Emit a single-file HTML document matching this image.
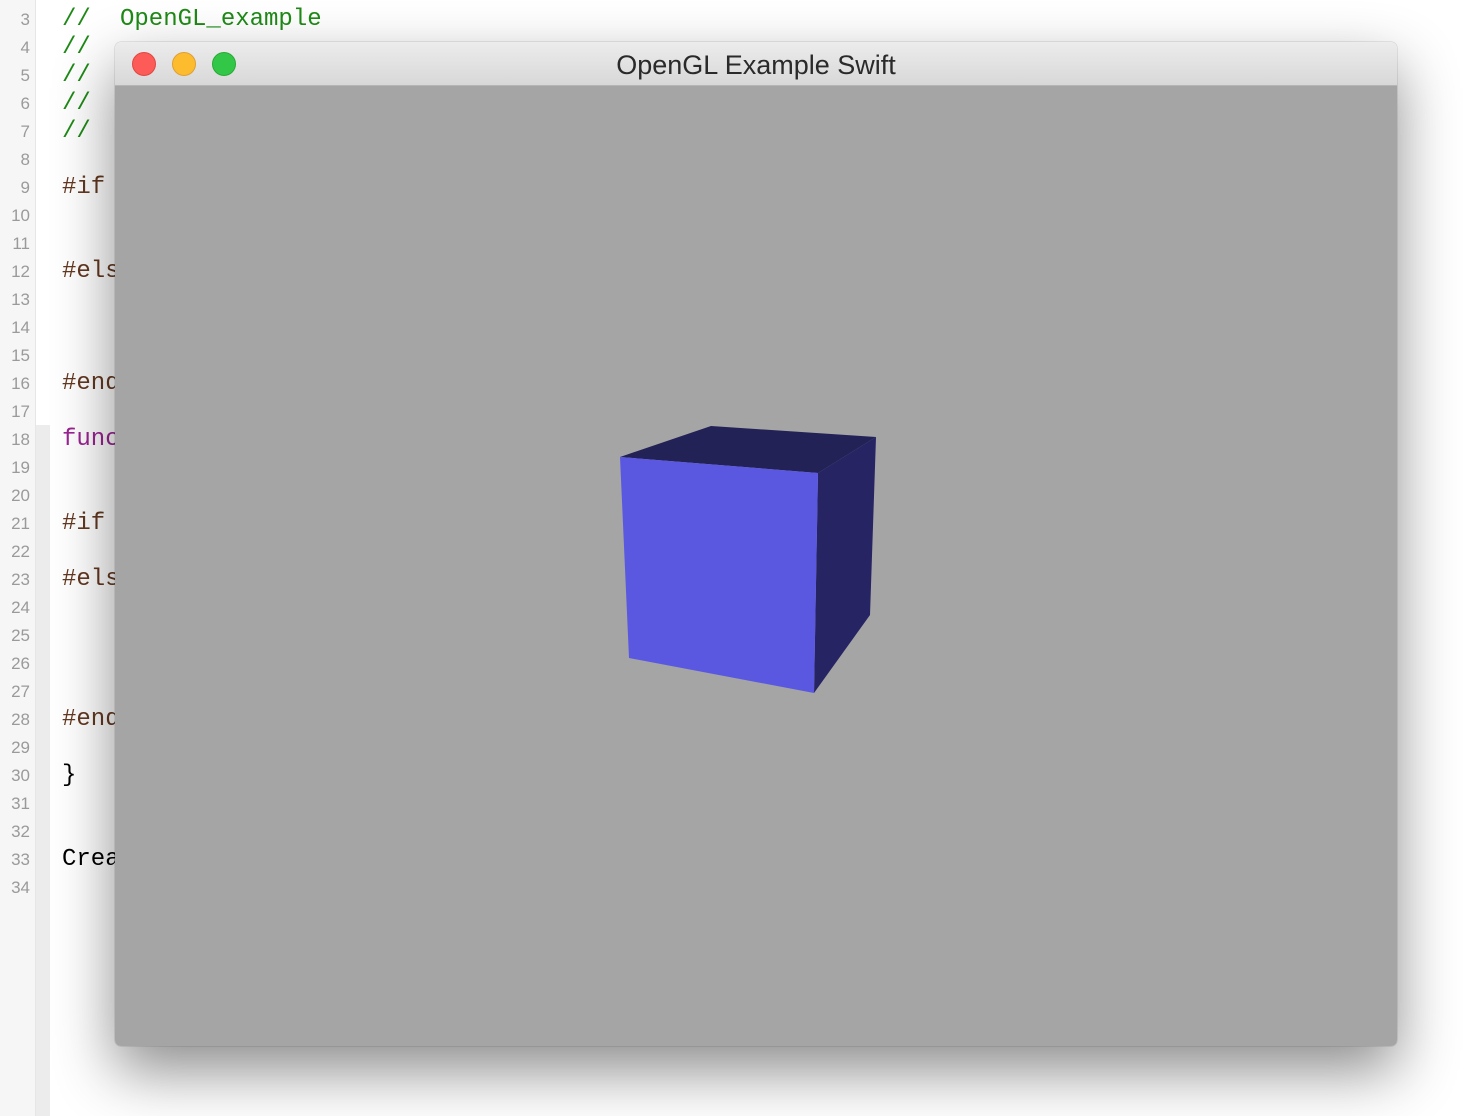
<!DOCTYPE html>
<html><head><meta charset="utf-8"><style>
*{margin:0;padding:0;box-sizing:border-box}
body{width:1474px;height:1116px;overflow:hidden;background:#fff;position:relative;font-family:"Liberation Mono",monospace}
.gut{position:absolute;left:0;top:0;width:36px;height:1116px;background:#f6f6f6;border-right:1px solid #e6e6e6}
.ln{position:absolute;left:0;width:30px;text-align:right;font-size:17px;color:#9a9a9a;font-family:"Liberation Sans",sans-serif;line-height:28px}
.cd{position:absolute;left:62px;font-size:24px;white-space:pre;line-height:28px}
.g{color:#1e8a16}.b{color:#643820}.p{color:#9b2393}.k{color:#000}
.win{position:absolute;left:115px;top:42px;width:1282px;height:1004px;border-radius:6px;overflow:hidden;box-shadow:0 25px 60px rgba(0,0,0,.45),0 0 1px rgba(0,0,0,.5)}
.tb{height:44px;background:linear-gradient(#ececec,#d8d8d8);border-bottom:1px solid #b5b5b5;position:relative;text-align:center;font-family:"Liberation Sans",sans-serif;font-size:27px;line-height:46px;color:#2a2a2a}
.dot{position:absolute;top:10px;width:24px;height:24px;border-radius:50%}
.ct{position:absolute;top:44px;left:0;right:0;bottom:0;background:#a5a5a5}
</style></head><body>
<div class="gut"></div>
<div style="position:absolute;left:36px;top:425px;width:14px;height:691px;background:#ececec"></div>
<div class="ln" style="top:6px">3</div>
<div class="ln" style="top:34px">4</div>
<div class="ln" style="top:62px">5</div>
<div class="ln" style="top:90px">6</div>
<div class="ln" style="top:118px">7</div>
<div class="ln" style="top:146px">8</div>
<div class="ln" style="top:174px">9</div>
<div class="ln" style="top:202px">10</div>
<div class="ln" style="top:230px">11</div>
<div class="ln" style="top:258px">12</div>
<div class="ln" style="top:286px">13</div>
<div class="ln" style="top:314px">14</div>
<div class="ln" style="top:342px">15</div>
<div class="ln" style="top:370px">16</div>
<div class="ln" style="top:398px">17</div>
<div class="ln" style="top:426px">18</div>
<div class="ln" style="top:454px">19</div>
<div class="ln" style="top:482px">20</div>
<div class="ln" style="top:510px">21</div>
<div class="ln" style="top:538px">22</div>
<div class="ln" style="top:566px">23</div>
<div class="ln" style="top:594px">24</div>
<div class="ln" style="top:622px">25</div>
<div class="ln" style="top:650px">26</div>
<div class="ln" style="top:678px">27</div>
<div class="ln" style="top:706px">28</div>
<div class="ln" style="top:734px">29</div>
<div class="ln" style="top:762px">30</div>
<div class="ln" style="top:790px">31</div>
<div class="ln" style="top:818px">32</div>
<div class="ln" style="top:846px">33</div>
<div class="ln" style="top:874px">34</div>
<div class="cd g" style="top:6px">//</div>
<div class="cd g" style="top:6px;left:120px">OpenGL_example</div>
<div class="cd g" style="top:34px">//</div>
<div class="cd g" style="top:62px">//</div>
<div class="cd g" style="top:90px">//</div>
<div class="cd g" style="top:118px">//</div>
<div class="cd b" style="top:174px">#if</div>
<div class="cd b" style="top:258px">#els</div>
<div class="cd b" style="top:370px">#end</div>
<div class="cd p" style="top:426px">func</div>
<div class="cd b" style="top:510px">#if</div>
<div class="cd b" style="top:566px">#els</div>
<div class="cd b" style="top:706px">#end</div>
<div class="cd k" style="top:762px">}</div>
<div class="cd k" style="top:846px">Crea</div>
<div class="win">
<div class="tb">OpenGL Example Swift
<div class="dot" style="left:17px;background:#fc5b57;border:1px solid #df4744"></div>
<div class="dot" style="left:57px;background:#fdbc2e;border:1px solid #de9f34"></div>
<div class="dot" style="left:97px;background:#33c748;border:1px solid #27aa35"></div>
</div>
<div class="ct"></div>
</div>
<svg style="position:absolute;left:0;top:0" width="1474" height="1116">
<polygon points="620,457 711,426 876,437 818,473" fill="#222257"/>
<polygon points="818,473 876,437 870,615 814,693" fill="#262463"/>
<polygon points="620,457 818,473 814,693 629,658" fill="#5a58e0"/>
</svg>
</body></html>
